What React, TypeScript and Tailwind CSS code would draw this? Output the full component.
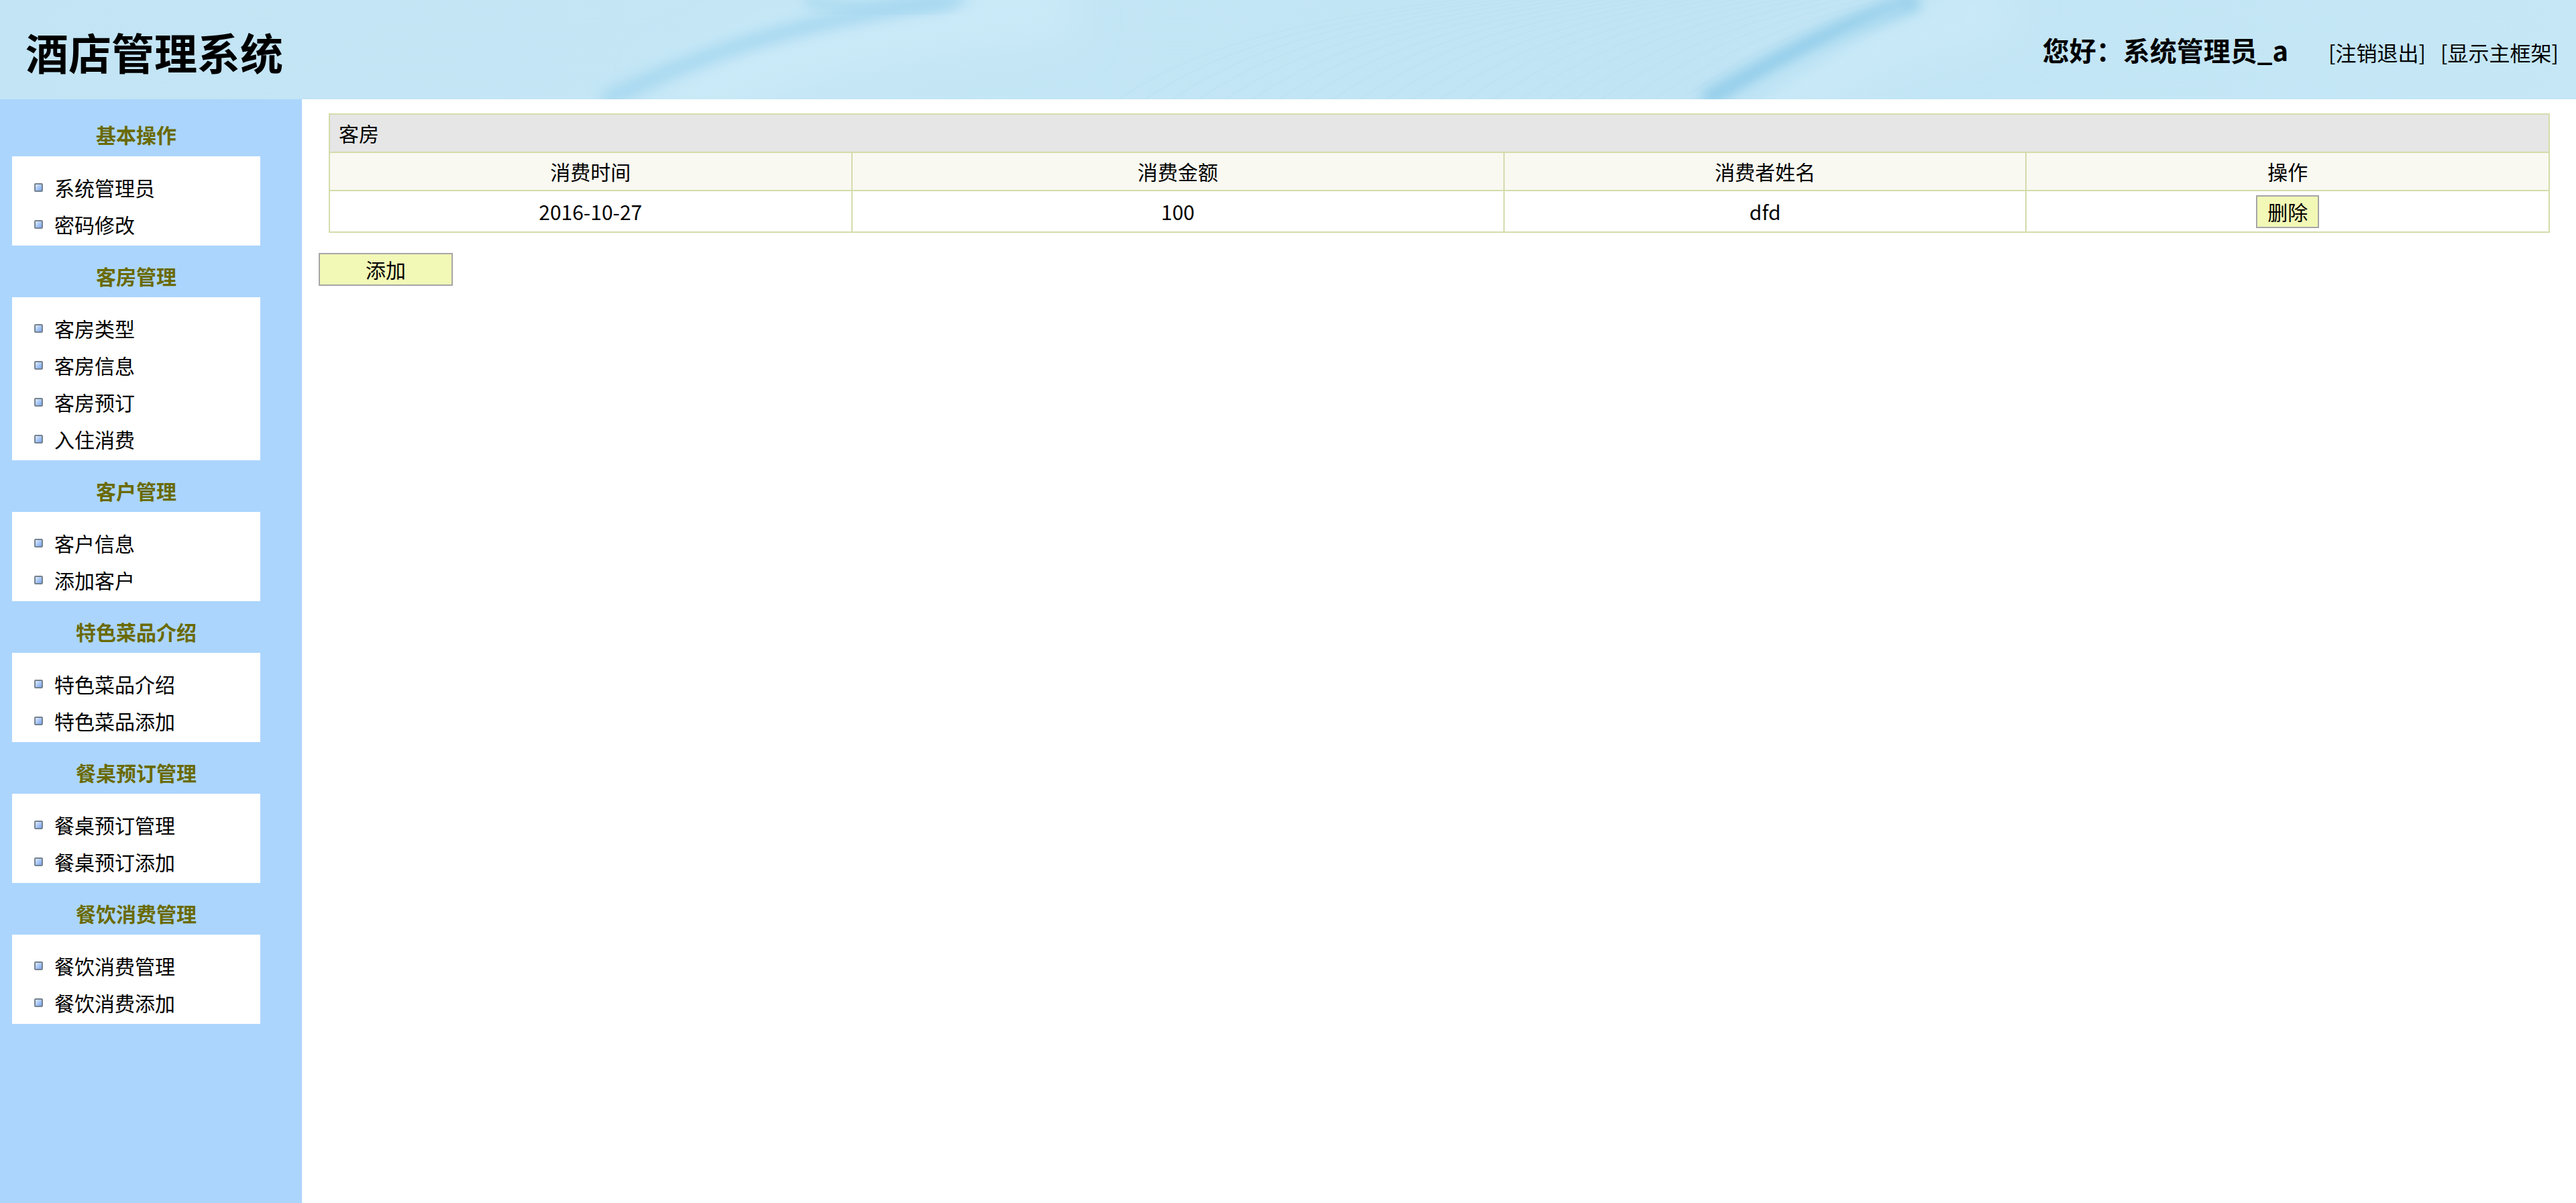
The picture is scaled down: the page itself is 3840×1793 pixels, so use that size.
import React from 'react';

type MenuSection = {
  title: string;
  items: string[];
};

const menu: MenuSection[] = [
  { title: '基本操作', items: ['系统管理员', '密码修改'] },
  { title: '客房管理', items: ['客房类型', '客房信息', '客房预订', '入住消费'] },
  { title: '客户管理', items: ['客户信息', '添加客户'] },
  { title: '特色菜品介绍', items: ['特色菜品介绍', '特色菜品添加'] },
  { title: '餐桌预订管理', items: ['餐桌预订管理', '餐桌预订添加'] },
  { title: '餐饮消费管理', items: ['餐饮消费管理', '餐饮消费添加'] },
];

const rows = [{ time: '2016-10-27', amount: '100', name: 'dfd' }];

const HeaderWaves = () => (
  <svg
    className="absolute inset-0 h-full w-full"
    viewBox="0 0 3840 148"
    preserveAspectRatio="none"
  >
    <defs>
      <filter id="soft" x="-20%" y="-50%" width="140%" height="200%">
        <feGaussianBlur stdDeviation="10" />
      </filter>
      <filter id="wide" x="-20%" y="-50%" width="140%" height="200%">
        <feGaussianBlur stdDeviation="30" />
      </filter>
      <linearGradient id="base" x1="0" y1="0" x2="1" y2="0">
        <stop offset="0" stopColor="#c2e4f4" />
        <stop offset="0.3" stopColor="#c4e6f5" />
        <stop offset="0.65" stopColor="#c1e4f4" />
        <stop offset="1" stopColor="#c5e7f6" />
      </linearGradient>
    </defs>
    <rect width="3840" height="148" fill="url(#base)" />
    {/* fine line texture */}
    {Array.from({ length: 22 }).map((_, i) => (
      <path
        key={i}
        d={`M ${1650 + i * 40} 160 C ${1760 + i * 40} 80, ${1900 + i * 38} 30, ${2250 + i * 30} -10`}
        stroke="#b5ddf0"
        strokeWidth="2"
        fill="none"
        opacity="0.3"
      />
    ))}
    {/* first sweep */}
    <path d="M 1000 160 C 1100 90, 1250 40, 1600 10" stroke="#cbeaf8" strokeWidth="90" fill="none" filter="url(#wide)" />
    <path d="M 900 150 C 1020 95, 1150 35, 1420 0" stroke="#a2d6ef" strokeWidth="22" fill="none" filter="url(#soft)" opacity="0.9" />
    <path d="M 1200 0 C 1290 22, 1360 12, 1440 -4" stroke="#a9d9f0" strokeWidth="18" fill="none" filter="url(#soft)" />
    {/* second sweep */}
    <path d="M 2620 170 C 2720 100, 2820 50, 3000 10" stroke="#c9e9f7" strokeWidth="90" fill="none" filter="url(#wide)" />
    <path d="M 2540 150 C 2640 95, 2720 45, 2860 0" stroke="#93cdea" strokeWidth="26" fill="none" filter="url(#soft)" />
    <path d="M 2600 150 C 2680 110, 2740 60, 2840 10" stroke="#b6e0f3" strokeWidth="10" fill="none" filter="url(#soft)" />
  </svg>
);

const Bullet = () => (
  <span className="block h-[13px] w-[13px] shrink-0 rounded-[2px] border-2 border-[#76838f] bg-gradient-to-br from-[#e0ecff] to-[#78a4ee]" />
);

const Sidebar = () => (
  <aside className="w-[450px] shrink-0 bg-[#abd5fd] pl-[18px]">
    {menu.map((section, idx) => (
      <div key={section.title} className="w-[370px]">
        <div
          className={`${idx === 0 ? 'pt-[32px] pb-[13px]' : 'pt-[25px] pb-[12px]'} text-center text-[30px] leading-[40px] font-bold text-[#6a6a00]`}
        >
          {section.title}
        </div>
        <ul className="bg-white pt-[19px] pb-[4px]">
          {section.items.map((item) => (
            <li key={item} className="flex h-[55px] items-center pl-[33px] text-[30px] text-black">
              <Bullet />
              <span className="ml-[17px]">{item}</span>
            </li>
          ))}
        </ul>
      </div>
    ))}
  </aside>
);

export default function App() {
  return (
    <div className="flex h-screen flex-col overflow-hidden font-['Noto_Sans_CJK_SC','Microsoft_YaHei',sans-serif] text-black">
      <header className="relative h-[148px] shrink-0 overflow-hidden">
        <HeaderWaves />
        <div className="relative flex h-full items-center justify-between pl-[38px] pr-[26px]">
          <h1 className="mt-[4px] text-[64px] font-bold leading-none">酒店管理系统</h1>
          <div className="flex items-baseline">
            <span className="text-[40px] font-bold">您好：系统管理员_a</span>
            <a className="ml-[60px] text-[31px]">[注销退出]</a>
            <a className="ml-[22px] text-[31px]">[显示主框架]</a>
          </div>
        </div>
      </header>

      <div className="flex min-h-0 flex-1">
        <Sidebar />
        <main className="flex-1 bg-white pt-[21px]">
          <table className="mx-[40px] w-[3311px] border-collapse text-[30px]">
            <colgroup>
              <col className="w-[779px]" />
              <col className="w-[973px]" />
              <col className="w-[779px]" />
              <col className="w-[780px]" />
            </colgroup>
            <thead>
              <tr>
                <th
                  colSpan={4}
                  className="h-[57px] border-2 border-[#d3dcab] bg-[#e6e6e6] pl-[13px] text-left font-normal"
                >
                  客房
                </th>
              </tr>
              <tr className="bg-[#f9f9f1]">
                {['消费时间', '消费金额', '消费者姓名', '操作'].map((h) => (
                  <th key={h} className="h-[57px] border-2 border-[#d3dcab] text-center font-normal">
                    {h}
                  </th>
                ))}
              </tr>
            </thead>
            <tbody>
              {rows.map((r) => (
                <tr key={r.time}>
                  <td className="h-[62px] border-2 border-[#d3dcab] text-center">{r.time}</td>
                  <td className="border-2 border-[#d3dcab] text-center">{r.amount}</td>
                  <td className="border-2 border-[#d3dcab] text-center">{r.name}</td>
                  <td className="border-2 border-[#d3dcab] text-center">
                    <button className="mx-auto flex h-[49px] w-[94px] items-center justify-center border-2 border-[#a6a6a6] bg-[#f2f8b6] text-[30px]">
                      删除
                    </button>
                  </td>
                </tr>
              ))}
            </tbody>
          </table>
          <button className="ml-[25px] mt-[30px] flex h-[49px] w-[200px] items-center justify-center border-2 border-[#a6a6a6] bg-[#f2f8b6] text-[30px]">
            添加
          </button>
        </main>
      </div>
    </div>
  );
}
